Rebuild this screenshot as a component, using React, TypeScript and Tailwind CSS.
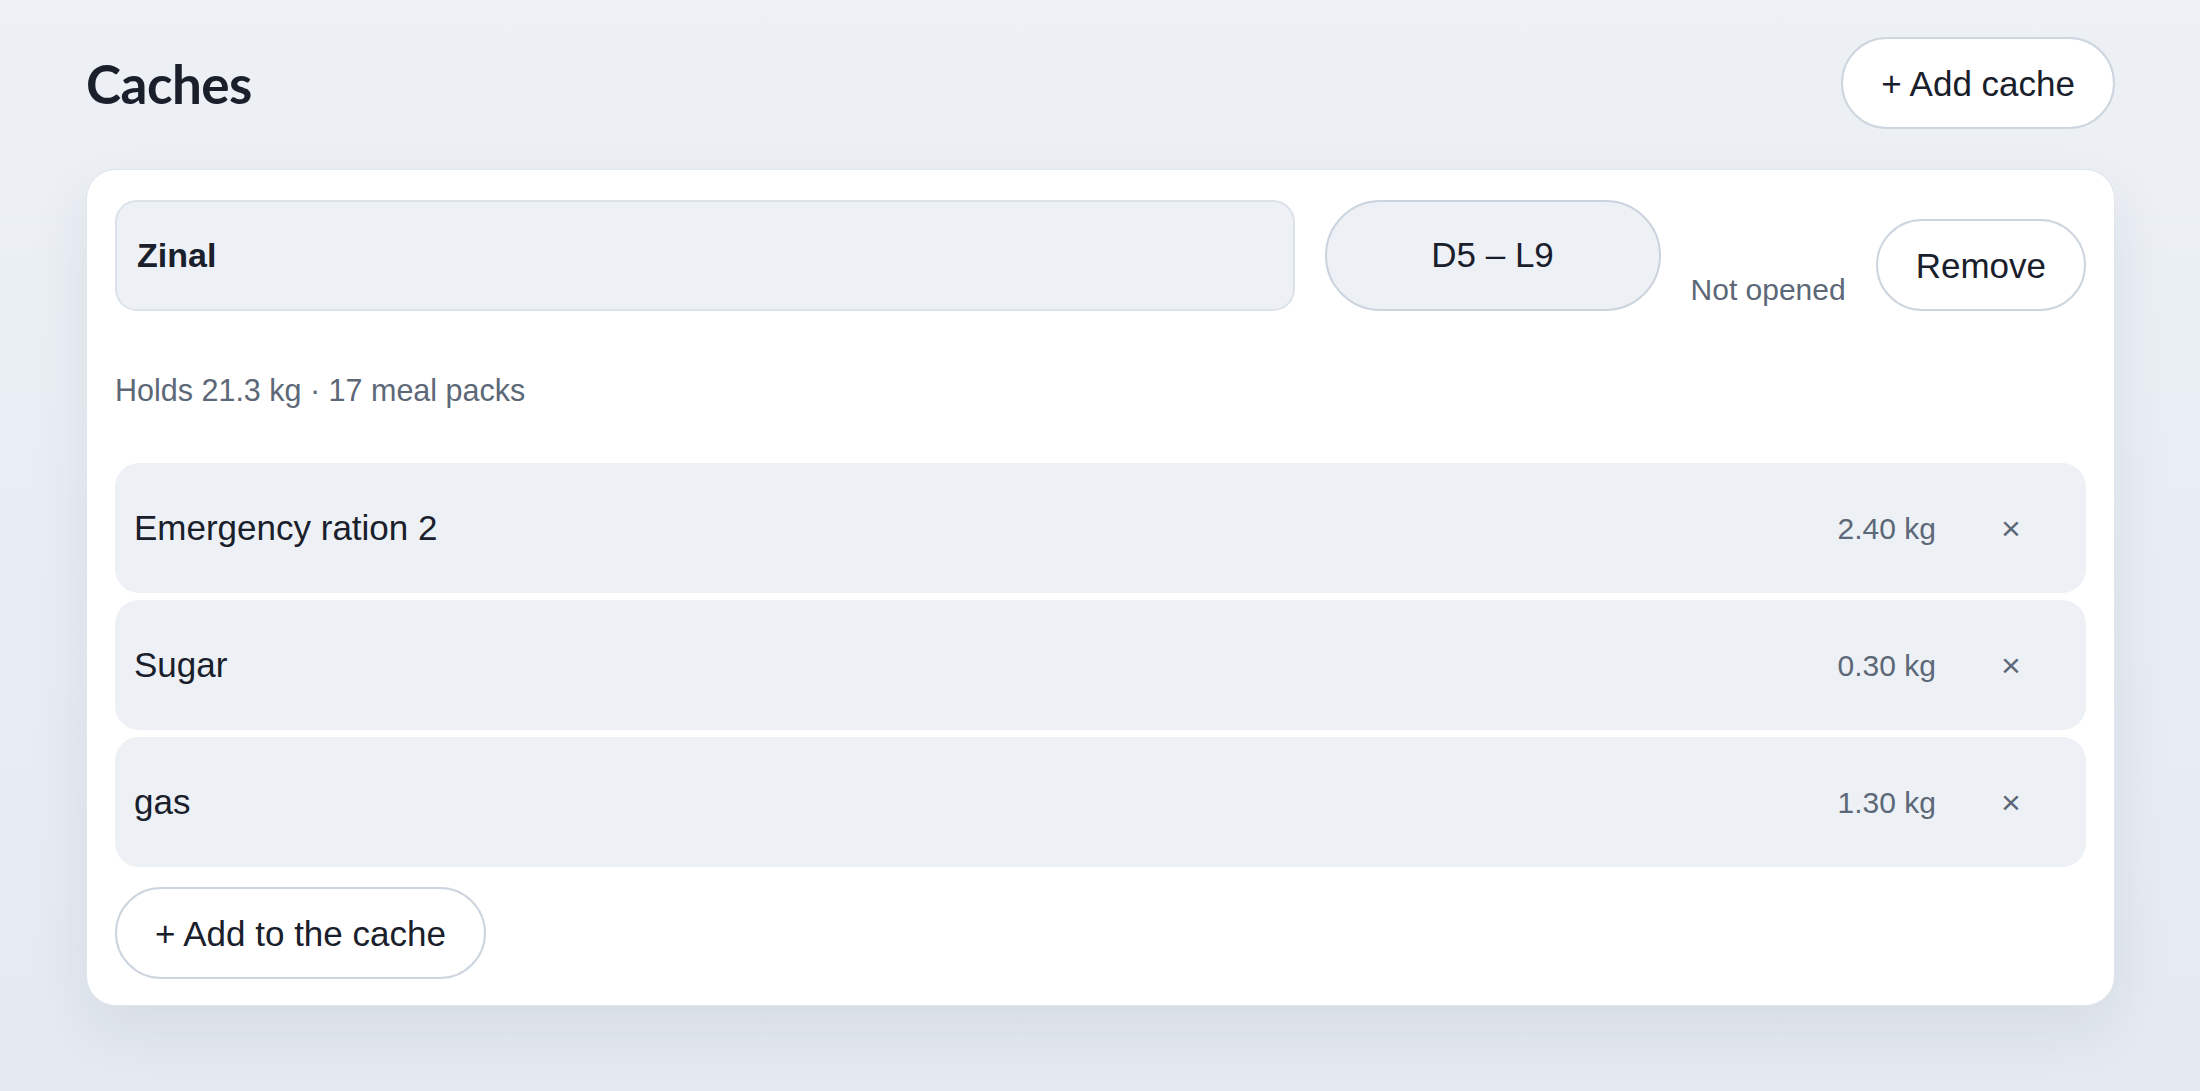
import React, { useState } from 'react';

type Item = { id: number; name: string; kg: number };

const initialItems: Item[] = [
  { id: 1, name: 'Emergency ration 2', kg: 2.4 },
  { id: 2, name: 'Sugar', kg: 0.3 },
  { id: 3, name: 'gas', kg: 1.3 },
];

const pillBtn =
  'h-[92px] rounded-full border-2 border-[#cdd5df] bg-white px-[38px] text-[35px] text-[#19202b] leading-none';

export default function App() {
  const [name, setName] = useState('Zinal');
  const [items, setItems] = useState<Item[]>(initialItems);

  return (
    <div
      className="min-h-screen bg-gradient-to-b from-[#edf1f6] to-[#e5eaf1] pl-[86px] pr-[85px] pt-[37px] pb-[80px] text-[#19202b]"
      style={{ fontFamily: '"Liberation Sans", Arial, sans-serif' }}
    >
      <div className="flex items-center justify-between">
        <h1
          className="text-[53px] font-bold tracking-[-0.01em] text-[#19202b] leading-none"
          style={{ fontFamily: 'Lato, "Liberation Sans", sans-serif' }}
        >
          Caches
        </h1>
        <button className={pillBtn}>+ Add cache</button>
      </div>

      <div className="mt-[40px] rounded-[30px] border border-[#e0e6ee] bg-white px-[28px] pt-[30px] pb-[26px] shadow-[0_24px_60px_rgba(30,41,59,0.08)]">
        <div className="flex items-end gap-[30px]">
          <input
            value={name}
            onChange={(e) => setName(e.target.value)}
            className="h-[111px] min-w-0 flex-1 rounded-[22px] border-2 border-[#dbe2ea] bg-[#edf1f6] pl-[20px] text-[34px] font-bold text-[#19202b] outline-none"
          />
          <button className="h-[111px] w-[336px] rounded-full border-2 border-[#cbd3de] bg-[#edf1f6] text-[35px] text-[#19202b]">
            D5 – L9
          </button>
          <span className="text-[30px] leading-[43px] text-[#5c6877]">Not opened</span>
          <button className={pillBtn}>Remove</button>
        </div>

        <div className="mt-[57px] text-[30.5px] leading-[45px] text-[#5c6877]">
          Holds 21.3 kg · 17 meal packs
        </div>

        <div className="mt-[50px] flex flex-col gap-[7px]">
          {items.map((it) => (
            <div
              key={it.id}
              className="flex h-[130px] items-center rounded-[24px] bg-[#edf1f5] pl-[19px] pr-[42px]"
            >
              <span className="flex-1 text-[35px] text-[#19202b]">{it.name}</span>
              <span className="text-[30px] text-[#5c6877]">{it.kg.toFixed(2)} kg</span>
              <button
                onClick={() => setItems(items.filter((x) => x.id !== it.id))}
                className="ml-[42px] w-[66px] text-center text-[34px] text-[#5c6877]"
              >
                ×
              </button>
            </div>
          ))}
        </div>

        <button className={`mt-[20px] ${pillBtn} h-[90px]`}>+ Add to the cache</button>
      </div>
    </div>
  );
}
